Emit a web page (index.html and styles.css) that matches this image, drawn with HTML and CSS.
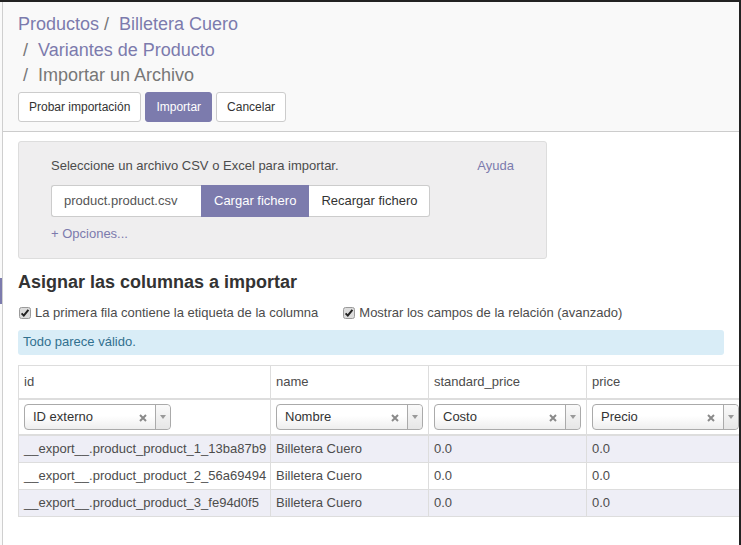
FILE: index.html
```html
<!DOCTYPE html>
<html lang="es">
<head>
<meta charset="utf-8">
<title>Importar un Archivo</title>
<link rel="stylesheet" href="styles.css">
</head>
<body>
<div class="frame">
  <div class="strip"><div class="strip-mark"></div></div>
  <div class="main">
    <div class="panel">
      <ol class="crumbs"><li class="crumb"><a>Productos</a></li><li class="crumb"><a>Billetera Cuero</a></li><li class="crumb"><a>Variantes de Producto</a></li><li class="crumb active">Importar un Archivo</li></ol>
      <div class="btns">
        <button class="btn">Probar importación</button>
        <button class="btn primary">Importar</button>
        <button class="btn">Cancelar</button>
      </div>
    </div>
    <div class="content">
      <div class="filebox">
        <div class="filebox-top">
          <span>Seleccione un archivo CSV o Excel para importar.</span>
          <a class="link">Ayuda</a>
        </div>
        <div class="filegroup">
          <div class="fileinput">product.product.csv</div>
          <button class="gbtn primary">Cargar fichero</button>
          <button class="gbtn last">Recargar fichero</button>
        </div>
        <a class="link opts">+ Opciones...</a>
      </div>
      <h2 class="title">Asignar las columnas a importar</h2>
      <div class="checks">
        <label class="chk"><span class="box"><svg width="12" height="12" viewBox="0 0 12 12"><rect x="0.5" y="0.5" width="11" height="11" rx="2" fill="#dcdcdc" stroke="#9a9a9a"/><path d="M2.6 6.4 L4.8 8.6 L9.4 2.8" fill="none" stroke="#222" stroke-width="2"/></svg></span>La primera fila contiene la etiqueta de la columna</label>
        <label class="chk"><span class="box"><svg width="12" height="12" viewBox="0 0 12 12"><rect x="0.5" y="0.5" width="11" height="11" rx="2" fill="#dcdcdc" stroke="#9a9a9a"/><path d="M2.6 6.4 L4.8 8.6 L9.4 2.8" fill="none" stroke="#222" stroke-width="2"/></svg></span>Mostrar los campos de la relación (avanzado)</label>
      </div>
      <div class="alert">Todo parece válido.</div>
      <table class="grid">
        <thead>
          <tr class="hrow">
            <th class="c-id">id</th>
            <th class="c-n">name</th>
            <th class="c-n">standard_price</th>
            <th class="c-n">price</th>
          </tr>
          <tr class="srow">
            <th><div class="sel"><span class="sel-txt">ID externo</span><span class="sel-x"><svg width="8" height="8" viewBox="0 0 8 8"><path d="M1 1 L7 7 M7 1 L1 7" stroke="#8a8a8a" stroke-width="2"/></svg></span><span class="sel-arr"><span class="tri"></span></span></div></th>
            <th><div class="sel"><span class="sel-txt">Nombre</span><span class="sel-x"><svg width="8" height="8" viewBox="0 0 8 8"><path d="M1 1 L7 7 M7 1 L1 7" stroke="#8a8a8a" stroke-width="2"/></svg></span><span class="sel-arr"><span class="tri"></span></span></div></th>
            <th><div class="sel"><span class="sel-txt">Costo</span><span class="sel-x"><svg width="8" height="8" viewBox="0 0 8 8"><path d="M1 1 L7 7 M7 1 L1 7" stroke="#8a8a8a" stroke-width="2"/></svg></span><span class="sel-arr"><span class="tri"></span></span></div></th>
            <th><div class="sel"><span class="sel-txt">Precio</span><span class="sel-x"><svg width="8" height="8" viewBox="0 0 8 8"><path d="M1 1 L7 7 M7 1 L1 7" stroke="#8a8a8a" stroke-width="2"/></svg></span><span class="sel-arr"><span class="tri"></span></span></div></th>
          </tr>
        </thead>
        <tbody>
          <tr class="odd"><td>__export__.product_product_1_13ba87b9</td><td>Billetera Cuero</td><td>0.0</td><td>0.0</td></tr>
          <tr><td>__export__.product_product_2_56a69494</td><td>Billetera Cuero</td><td>0.0</td><td>0.0</td></tr>
          <tr class="odd"><td>__export__.product_product_3_fe94d0f5</td><td>Billetera Cuero</td><td>0.0</td><td>0.0</td></tr>
        </tbody>
      </table>
    </div>
  </div>
</div>
</body>
</html>
```
FILE: styles.css
```css
* { box-sizing: border-box; }
html, body { margin: 0; padding: 0; background: #fff; }
body { font-family: "Liberation Sans", Arial, sans-serif; font-size: 13px; color: #4c4c4c; }

.frame {
  width: 741px;
  height: 545px;
  border-top: 2px solid #222;
  border-right: 2px solid #222;
  overflow: hidden;
  display: flex;
}
.strip { width: 2px; flex: none; background: #fafafa; }
.strip-mark { margin-top: 276px; height: 26px; background: #7c7bad; }
.main { flex: 1; min-width: 0; border-left: 1px solid #cfcfcf; }

.panel {
  background: #f9f9f9;
  border-bottom: 1px solid #ccc;
  padding: 10px 15px 9px 15px;
}
.crumbs {
  list-style: none;
  margin: 0;
  padding: 0;
  width: 350px;
  font-size: 18px;
  line-height: 25.5px;
}
.crumb { display: inline-block; color: #7c7bad; }
.crumb + .crumb::before { content: "/\00a0"; padding: 0 5px; color: #777; }
.crumb.active { color: #777; }
.btns { display: flex; gap: 4px; margin-top: 3px; }
.btn {
  font-family: inherit;
  font-size: 12px;
  line-height: 18px;
  padding: 5px 10px;
  border: 1px solid #ccc;
  border-radius: 3px;
  background: #fff;
  color: #333;
}
.btn.primary { background: #7c7bad; border-color: #7c7bad; color: #fff; }

.content { padding: 0 15px; }
.filebox {
  margin-top: 9px;
  width: 529px;
  background: #efeeef;
  border: 1px solid #ddd;
  border-radius: 3px;
  padding: 15px 32px 15px 32px;
  line-height: 18px;
}
.filebox-top { display: flex; justify-content: space-between; }
.link { color: #7c7bad; }
.filegroup { display: flex; margin-top: 10px; }
.fileinput {
  width: 150px;
  height: 32px;
  padding: 6px 12px;
  background: #fff;
  border: 1px solid #ccc;
  border-right: none;
  border-radius: 3px 0 0 3px;
  color: #555;
}
.gbtn {
  font-family: inherit;
  font-size: 13px;
  height: 32px;
  padding: 6px 12px;
  border: 1px solid #ccc;
  background: #fff;
  color: #333;
}
.gbtn.primary { background: #7c7bad; border-color: #7c7bad; color: #fff; padding: 6px 12px; }
.gbtn.last { border-radius: 0 3px 3px 0; border-left: none; }
.opts { display: block; margin-top: 8px; }

.title {
  margin: 13px 0 0 0;
  font-size: 18px;
  line-height: 20px;
  font-weight: bold;
  color: #333;
}
.checks { display: flex; gap: 24px; margin-top: 12px; line-height: 18px; }
.chk { display: flex; align-items: center; }
.box { display: inline-flex; margin: 0 4px 0 1px; }

.alert {
  margin-top: 8px;
  background: #d9edf7;
  color: #31708f;
  border-radius: 3px;
  padding: 3px 5px 4px 5px;
  line-height: 18px;
}

.grid {
  margin-top: 10px;
  border-collapse: collapse;
  table-layout: fixed;
  width: 726px;
  border: 1px solid #ddd;
  line-height: 18px;
}
.grid th, .grid td {
  border: 1px solid #ddd;
  text-align: left;
  font-weight: normal;
  white-space: nowrap;
  overflow: hidden;
}
.c-id { width: 252px; }
.c-n { width: 158px; }
.hrow th { padding: 7px 5px; border-bottom: 2px solid #ddd; }
.srow th { padding: 4px 5px; border-bottom: 2px solid #ddd; }
.grid td { padding: 4px 5px; }
.grid tr.odd td { background: #eeeef6; }

.sel {
  width: 147px;
  height: 26px;
  display: flex;
  align-items: center;
  border: 1px solid #aaa;
  border-radius: 4px;
  background: linear-gradient(#fff 45%, #eee);
  color: #333;
}
.sel-txt { flex: 1; padding-left: 8px; }
.sel-x { display: inline-flex; margin-right: 8px; margin-top: 3px; }
.sel-arr {
  width: 15px;
  align-self: stretch;
  border-left: 1px solid #aaa;
  display: flex;
  align-items: center;
  justify-content: center;
  background: linear-gradient(#fafafa, #e6e6e6);
  border-radius: 0 4px 4px 0;
}
.tri {
  width: 0;
  height: 0;
  border-left: 3px solid transparent;
  border-right: 3px solid transparent;
  border-top: 4px solid #999;
}
```
